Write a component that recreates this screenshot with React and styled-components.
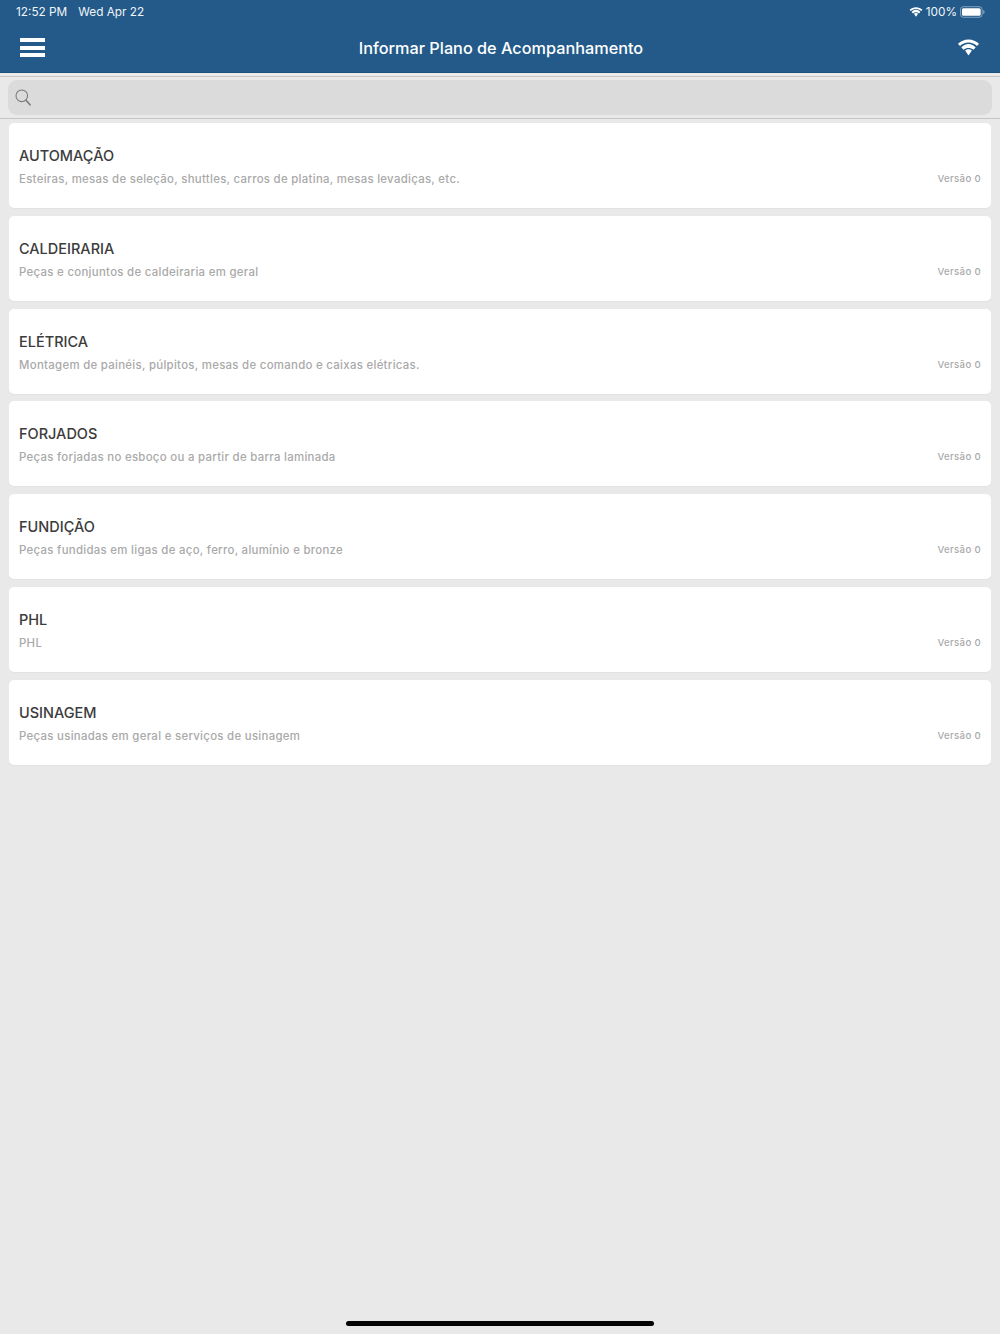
import React from 'react';
import styled, { createGlobalStyle } from 'styled-components';

const Global = createGlobalStyle`
  html, body { margin: 0; padding: 0; background: #e9e9e9; }
  * { box-sizing: border-box; }
  body { font-family: Inter, "Liberation Sans", sans-serif; }
`;
const Page = styled.div`
  height: 1334px; display: flex; flex-direction: column; background: #e9e9e9; overflow: hidden;
`;
const Header = styled.header`
  height: 73px; flex: none; background: #235a89; border-bottom: 1px solid #1d4f7a;
  color: #fff; display: flex; flex-direction: column;
`;
const StatusBar = styled.div`
  height: 23px; padding: 0 15px 0 16px; display: flex; align-items: center; justify-content: space-between;
  font-size: 11.8px; color: #f2f5f8;
`;
const StatusGroup = styled.div`display: flex; align-items: center; gap: ${p => p.$gap || 10}px;`;
const NavBar = styled.div`
  flex: 1; display: flex; align-items: center; justify-content: space-between; padding: 0 20px;
`;
const Title = styled.h1`
  margin: 0; font-size: 16.25px; font-weight: 500; color: #fff;
`;
const MenuButton = styled.div`
  width: 25px; height: 19px; display: flex; flex-direction: column; justify-content: space-between;
`;
const MenuLine = styled.span`height: 4px; background: #fff; display: block;`;
const SearchArea = styled.div`
  flex: none; margin-top: 3px; height: 43px; padding: 3px 8px 2px;
  border-top: 1px solid #c4c4c4; border-bottom: 1px solid #c4c4c4;
`;
const SearchBox = styled.div`
  height: 35px; background: #dbdbdb; border-radius: 9px; display: flex; align-items: center; padding: 0 7px;
`;
const List = styled.main`
  display: flex; flex-direction: column; gap: 7.8px; padding: 4px 9px 0;
`;
const Card = styled.article`
  height: 85px; background: #fff; border-radius: 5px; padding: 24px 10px 0;
  box-shadow: 0 1px 1px rgba(0,0,0,0.03);
`;
const CardTitle = styled.h2`
  margin: 0; font-size: 14.5px; line-height: 18px; font-weight: 500; color: #3c3c3c;
`;
const CardRow = styled.div`
  margin-top: 6px; display: flex; justify-content: space-between; align-items: center; color: #a9a9a9;
`;
const Description = styled.span`font-size: 11.4px; line-height: 16px; font-weight: 500; letter-spacing: 0.3px;`;
const Version = styled.span`font-size: 9.6px; line-height: 16px; font-weight: 500; letter-spacing: 0.35px;`;
const HomeIndicator = styled.div`
  margin: auto auto 8px; width: 308px; height: 5px; border-radius: 3px; background: #050505; flex: none;
`;

const WifiIcon = ({ size = 14, h = 10 }) => (
  <svg width={size} height={h} viewBox="0 0 24 17" fill="#fff">
    <path d="M12 3.400c3.400 0 6.500 1.300 8.900 3.500l2.100-2.200C20.100 1.900 16.200.2 12 .2S3.900 1.900 1 4.700l2.100 2.200C5.500 4.700 8.600 3.400 12 3.400z" />
    <path d="M12 8.900c1.900 0 3.700.7 5.100 2l2.400-2.500C17.500 6.200 14.900 4.800 12 4.800S6.500 6.200 4.500 8.400l2.400 2.500c1.400-1.300 3.200-2 5.100-2z" />
    <path d="M12 10.200c-1.300 0-2.500.5-3.500 1.500L12 16.800l3.500-5.100c-1-1-2.200-1.500-3.500-1.500z" />
  </svg>
);
const BatteryIcon = () => (
  <svg width="25" height="12" viewBox="0 0 26 12">
    <rect x="0.500" y="0.500" width="22.500" height="11" rx="3" fill="none" stroke="#fff" strokeOpacity="0.45" />
    <rect x="2" y="2" width="19.500" height="8" rx="1.600" fill="#fff" />
    <path d="M24.200 4v4c.8-.2 1.300-1 1.300-2s-.5-1.800-1.300-2z" fill="#fff" fillOpacity="0.5" />
  </svg>
);
const SearchIcon = () => (
  <svg width="16" height="17" viewBox="0 0 16 17" fill="none" stroke="#7d7d7d">
    <circle cx="6.800" cy="6.800" r="5.800" strokeWidth="1.100" />
    <path d="M11 11.200l4 4.600" strokeWidth="1.700" strokeLinecap="round" />
  </svg>
);

const items = [
  ['AUTOMAÇÃO', 'Esteiras, mesas de seleção, shuttles, carros de platina, mesas levadiças, etc.'],
  ['CALDEIRARIA', 'Peças e conjuntos de caldeiraria em geral'],
  ['ELÉTRICA', 'Montagem de painéis, púlpitos, mesas de comando e caixas elétricas.'],
  ['FORJADOS', 'Peças forjadas no esboço ou a partir de barra laminada'],
  ['FUNDIÇÃO', 'Peças fundidas em ligas de aço, ferro, alumínio e bronze'],
  ['PHL', 'PHL'],
  ['USINAGEM', 'Peças usinadas em geral e serviços de usinagem'],
];

export default function App() {
  return (
    <Page>
      <Global />
      <Header>
        <StatusBar>
          <StatusGroup $gap={11}>
            <span>12:52 PM</span>
            <span>Wed Apr 22</span>
          </StatusGroup>
          <StatusGroup $gap={3}>
            <WifiIcon />
            <span>100%</span>
            <BatteryIcon />
          </StatusGroup>
        </StatusBar>
        <NavBar>
          <MenuButton><MenuLine /><MenuLine /><MenuLine /></MenuButton>
          <Title>Informar Plano de Acompanhamento</Title>
          <WifiIcon size={23} h={17} />
        </NavBar>
      </Header>
      <SearchArea>
        <SearchBox><SearchIcon /></SearchBox>
      </SearchArea>
      <List>
        {items.map(([t, d]) => (
          <Card key={t}>
            <CardTitle>{t}</CardTitle>
            <CardRow>
              <Description>{d}</Description>
              <Version>Versão 0</Version>
            </CardRow>
          </Card>
        ))}
      </List>
      <HomeIndicator />
    </Page>
  );
}
